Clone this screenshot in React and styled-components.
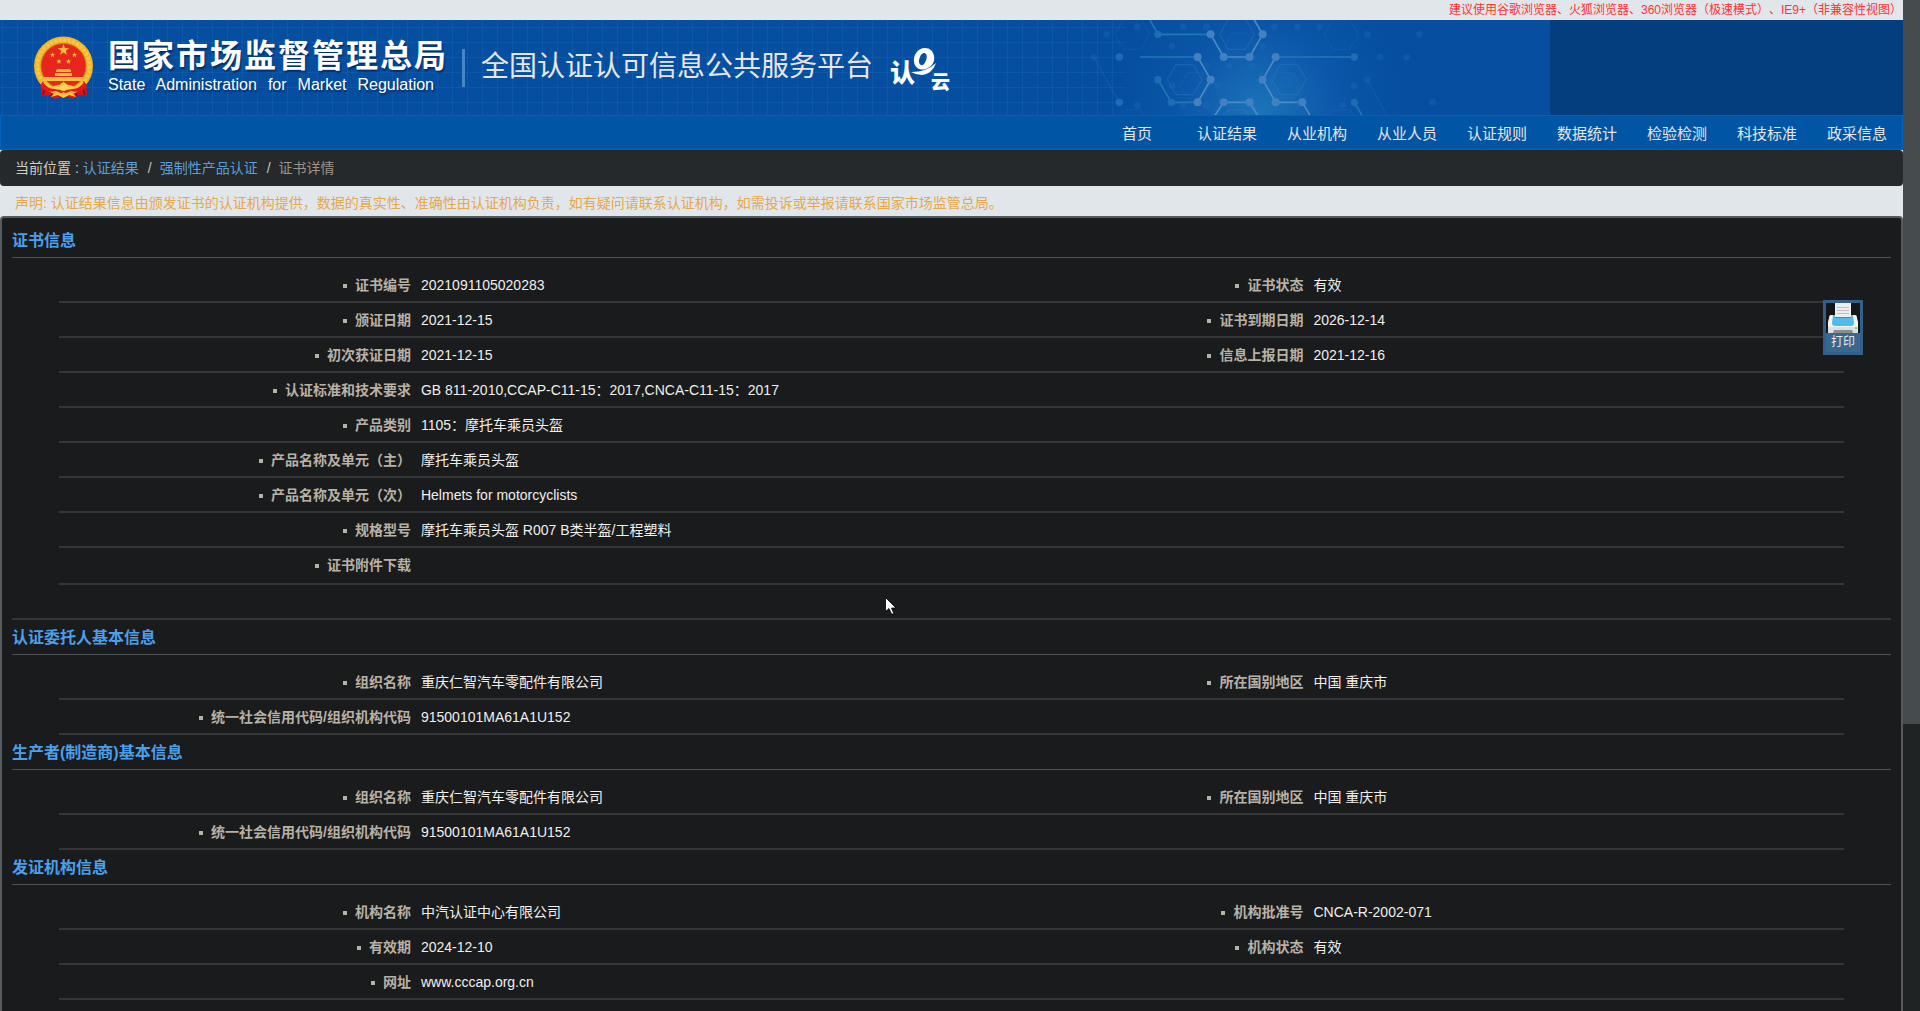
import React from "react";
import styled, { createGlobalStyle } from "styled-components";

const GlobalStyle = createGlobalStyle`
  *, *::before, *::after { box-sizing: border-box; }
  html, body, #root { height: 100%; }
  body {
    margin: 0;
    overflow: hidden;
    background: #e0e6ea;
    color: #e8e6e3;
    font: 14px/20px "Liberation Sans", "Noto Sans CJK SC", sans-serif;
    text-spacing-trim: space-all;
  }
`;

const Shell = styled.div`
  display: grid;
  grid-template-columns: minmax(0, 1fr) 17px;
  height: 100%;
`;

const Page = styled.div`
  display: flex;
  flex-direction: column;
  min-height: 0;
  overflow: hidden;
`;

const ScrollTrack = styled.div`
  background: #1f2324;
`;

const ScrollThumb = styled.div`
  height: ${(p) => p.$size}%;
  background: #464b4e;
`;

const BrowserTip = styled.p`
  flex: none;
  margin: 0;
  padding: 0 1px;
  text-align: right;
  font-size: 12px;
  line-height: 20px;
  color: #ff3333;
`;

const Header = styled.header`
  position: relative;
  flex: none;
  display: flex;
  align-items: center;
  height: 95px;
  padding-left: 33px;
  overflow: hidden;
  background: #053e7e;
`;

const HeaderArt = styled.svg`
  position: absolute;
  top: 0;
  left: 0;
`;

const Brand = styled.div`
  position: relative;
  display: flex;
  align-items: center;
`;

const BrandNames = styled.div`
  display: grid;
  width: 338px;
  margin-left: 13px;
  padding-bottom: 4px;
  color: #fff;
  text-align-last: justify;
  text-shadow: 1px 2px 2px rgba(0, 20, 60, 0.6);
`;

const Agency = styled.strong`
  font-size: 32px;
  line-height: 38px;
  font-weight: 700;
`;

const AgencyEnglish = styled.span`
  padding-right: 12px;
  font-size: 16px;
  line-height: 20px;
`;

const BrandDivider = styled.span`
  width: 3px;
  height: 38px;
  margin: 0 16px;
  background: #4a86c6;
`;

const PlatformName = styled.h1`
  margin: 0 16px 0 0;
  padding-bottom: 2px;
  font-size: 28px;
  line-height: 40px;
  font-weight: 400;
  color: #e8e6e3;
`;

const Nav = styled.nav`
  flex: none;
  display: flex;
  justify-content: flex-end;
  height: 35px;
  border: 1px solid #0063bd;
  background: #0055a5;
`;

const NavLink = styled.a`
  width: 90px;
  text-align: center;
  font-size: 15px;
  line-height: 35px;
  color: #e8e6e3;
  text-decoration: none;
`;

const Breadcrumb = styled.nav`
  flex: none;
  display: flex;
  align-items: center;
  height: 36px;
  padding: 0 15px;
  border-radius: 4px;
  background: #25292b;
  color: #d0ccc6;
`;

const Crumb = styled.span`
  color: #9c9488;

  & + &::before {
    content: "/";
    padding: 0 8px 0 9px;
    color: #c8c3bc;
  }
`;

const CrumbLabel = styled.span`
  margin-right: 4px;
`;

const CrumbLink = styled.a`
  color: #5a9fd8;
  text-decoration: none;
`;

const Notice = styled.p`
  flex: none;
  margin: 0;
  padding: 2px 15px 0;
  height: 30px;
  line-height: 30px;
  color: #e5a84c;
`;

const Panel = styled.main`
  position: relative;
  flex: 1 0 auto;
  padding: 5px 10px 40px;
  border: 2px solid #545b5e;
  border-radius: 4px;
  background: #1a1b1c;
`;

const SectionTitle = styled.h2`
  height: 35px;
  margin: 0 0 10px;
  border-bottom: 1px solid #4d5455;
  font-size: 16px;
  line-height: 36px;
  font-weight: 700;
  color: #4b9fea;
`;

const InfoTable = styled.table`
  width: 95%;
  margin: 0 auto;
  table-layout: fixed;
  border-collapse: separate;
  border-spacing: 0;
`;

const Row = styled.tr`
  height: ${(p) => (p.$tall ? 37 : 35)}px;
`;

const cell = `
  padding: 7px 5px 0;
  border-bottom: 2px solid #343638;
  vertical-align: top;
  line-height: 20px;
`;

const Label = styled.th`
  ${cell}
  width: 20%;
  text-align: right;
  font-weight: 700;
  color: #b8b1a6;

  &::before {
    content: "";
    display: inline-block;
    width: 4px;
    height: 4px;
    margin-right: 8px;
    vertical-align: middle;
    background: #b8b1a6;
  }
`;

const Value = styled.td`
  ${cell}
  text-align: left;
  color: #f0efed;
`;

const Spacer = styled.div`
  height: 35px;
  border-bottom: 2px solid #343638;
`;

const PrintButton = styled.button`
  position: absolute;
  top: 82px;
  right: 38px;
  display: flex;
  flex-direction: column;
  width: 40px;
  height: 55px;
  padding: 0;
  border: 3px solid #32608a;
  background: #38678f;
  color: #e8e6e3;
  font: 12px/18px "Liberation Sans", "Noto Sans CJK SC", sans-serif;
  cursor: pointer;
`;

const PrintCaption = styled.span`
  align-self: center;
`;

const Pointer = styled.svg`
  position: absolute;
  top: 597px;
  left: 885px;
  pointer-events: none;
`;

const navItems = ["首页", "认证结果", "从业机构", "从业人员", "认证规则", "数据统计", "检验检测", "科技标准", "政采信息"];

const organisation = [
  [["组织名称", "重庆仁智汽车零配件有限公司"], ["所在国别地区", "中国 重庆市"]],
  [["统一社会信用代码/组织机构代码", "91500101MA61A1U152"]],
];

const sections = [
  {
    title: "证书信息",
    spaced: true,
    rows: [
      [["证书编号", "2021091105020283"], ["证书状态", "有效"]],
      [["颁证日期", "2021-12-15"], ["证书到期日期", "2026-12-14"]],
      [["初次获证日期", "2021-12-15"], ["信息上报日期", "2021-12-16"]],
      [["认证标准和技术要求", "GB 811-2010,CCAP-C11-15：2017,CNCA-C11-15：2017"]],
      [["产品类别", "1105：摩托车乘员头盔"]],
      [["产品名称及单元（主）", "摩托车乘员头盔"]],
      [["产品名称及单元（次）", "Helmets for motorcyclists"]],
      [["规格型号", "摩托车乘员头盔 R007 B类半盔/工程塑料"]],
      [["证书附件下载", ""]],
    ],
  },
  { title: "认证委托人基本信息", rows: organisation },
  { title: "生产者(制造商)基本信息", rows: organisation },
  {
    title: "发证机构信息",
    rows: [
      [["机构名称", "中汽认证中心有限公司"], ["机构批准号", "CNCA-R-2002-071"]],
      [["有效期", "2024-12-10"], ["机构状态", "有效"]],
      [["网址", "www.cccap.org.cn"]],
    ],
  },
];

const star = (cx, cy, r) =>
  Array.from({ length: 10 }, (_, i) => {
    const a = (Math.PI / 5) * i - Math.PI / 2;
    const d = i % 2 ? r * 0.4 : r;
    return `${cx + d * Math.cos(a)},${cy + d * Math.sin(a)}`;
  }).join(" ");

const hexagon = (cx, cy, r) =>
  Array.from({ length: 6 }, (_, i) => {
    const a = (Math.PI / 3) * i;
    return `${cx + r * Math.cos(a)},${cy + r * Math.sin(a)}`;
  }).join(" ");

const brightNodes = [
  [392, 103], [548, 103], [431, 171], [509, 171], [353, 171], [392, 239], [353, 307], [431, 307],
  [509, 307], [548, 239], [587, 171], [587, 307], [667, 307],
];
const softNodes = [[234, 103], [118, 171], [234, 239], [274, 307], [118, 307], [823, 171], [823, 307]];
const faintNodes = [
  [80, 103], [41, 171], [862, 103], [862, 239], [900, 171], [447, 198], [514, 198], [548, 138], [379, 198],
  [412, 257], [379, 316], [310, 316], [276, 257], [276, 138], [652, 316], [788, 316], [310, 80], [379, 80],
  [584, 80], [652, 80], [720, 80], [172, 80], [172, 316], [822, 257], [980, 171], [1058, 307], [1018, 103],
];

function HeaderBackground() {
  return (
    <HeaderArt width="1550" height="95" viewBox="0 0 1550 95" aria-hidden="true">
      <defs>
        <pattern id="grid" width="15" height="15" x="2" y="7" patternUnits="userSpaceOnUse">
          <path d="M0 .5H15M.5 0V15" stroke="#1262b4" strokeOpacity=".5" fill="none" />
        </pattern>
        <radialGradient id="glow" gradientUnits="userSpaceOnUse" cx="540" cy="330" r="480">
          <stop offset="0" stopColor="#1b74b8" />
          <stop offset=".45" stopColor="#0d58ab" />
          <stop offset="1" stopColor="#064fa0" stopOpacity="0" />
        </radialGradient>
      </defs>
      <rect width="1550" height="95" fill="#064fa0" />
      <rect width="1126" height="95" fill="url(#grid)" />
      <g transform="translate(1080 -20) scale(.3333)">
        <rect x="0" y="60" width="1200" height="286" fill="url(#glow)" />
        <g fill="none" stroke="#3c83c4" strokeWidth="3">
          <g opacity=".4">
            <polygon points={hexagon(471, 103, 52)} />
            <polygon points={hexagon(314, 239, 52)} />
            <polygon points={hexagon(627, 239, 52)} />
            <polygon points={hexagon(471, 375, 52)} />
          </g>
          <g opacity=".18">
            <polygon points={hexagon(157, 103, 52)} />
            <polygon points={hexagon(784, 103, 52)} />
            <polygon points={hexagon(157, 375, 52)} />
            <polygon points={hexagon(784, 375, 52)} />
            <polygon points={hexagon(345, 257, 45)} />
            <polygon points={hexagon(615, 257, 45)} />
            <polygon points={hexagon(480, 138, 45)} />
            <polygon points={hexagon(480, 375, 68)} />
          </g>
        </g>
        <g fill="none" strokeWidth="5">
          <path stroke="#2079b4" d="M234 103H392M180 171H353M234 239L274 307H353M587 171H823M210 60L234 103M823 307L846 346" />
          <path stroke="#4b8cc4" d="M392 103L431 171H509L548 103L523 60M353 171L392 239L353 307M587 171L548 239L587 307H667L690 346M405 346L431 307H509L533 346" />
          <path stroke="#2470b8" strokeWidth="3" opacity=".4" d="M41 171L118 307M862 239L920 346" />
        </g>
        <g fill="#447fc0">{brightNodes.map(([x, y]) => <circle key={`${x}-${y}`} cx={x} cy={y} r="12" />)}</g>
        <g fill="#1d6db6">{softNodes.map(([x, y]) => <circle key={`${x}-${y}`} cx={x} cy={y} r="11" />)}</g>
        <g fill="#2270ba" opacity=".3">{faintNodes.map(([x, y]) => <circle key={`${x}-${y}`} cx={x} cy={y} r="10" />)}</g>
      </g>
    </HeaderArt>
  );
}

function Emblem() {
  return (
    <svg width="62" height="64" viewBox="0 0 62 64" role="img" aria-label="国徽">
      <path d="M9 44L8 60L16 59L22 63L31 60L40 63L46 59L54 60L53 44Z" fill="#d9131a" />
      <path d="M12 50L10 59M49 50L52 59M20 55L18 60M42 55L44 60" stroke="#8f0a10" strokeWidth="1.5" />
      <circle cx="30.500" cy="30" r="29.500" fill="#f4b52b" />
      <circle cx="30.500" cy="30" r="26" fill="none" stroke="#fbc944" strokeWidth="3" strokeDasharray="3 1.500" />
      <circle cx="30.500" cy="30" r="22.500" fill="#e8261d" stroke="#b9761a" strokeWidth="1" />
      <g fill="#f5c040">
        <polygon points={star(30.5, 14, 6)} />
        <polygon points={star(19.5, 19, 2.8)} />
        <polygon points={star(41.5, 19, 2.8)} />
        <polygon points={star(26, 25.5, 2.8)} />
        <polygon points={star(35.5, 25.5, 2.8)} />
        <path d="M23 34L25 33H36L38 34V36H23ZM22 37H39V40H22ZM10 41H51L49 45H12Z" />
      </g>
      <path d="M10 45Q18 55 30 49Q42 55 51 45L54 50Q48 58 38 55L30.500 58L23 55Q13 58 7 50Z" fill="#e01b1d" />
      <path d="M11 46Q20 57 30.500 47Q41 57 50 46" stroke="#fbc53c" strokeWidth="2" fill="none" />
      <path d="M19 52Q25 46 30.500 51Q36 46 42 52Q36 55 30.500 53Q25 55 19 52Z" fill="#ffcf45" />
      <path d="M18 61Q22 55 27 58L30.500 56L34 58Q39 55 43 61L36 59L30.500 62L25 59Z" fill="#ffc83a" />
      <circle cx="30.500" cy="51" r="4" fill="#ffd54f" />
    </svg>
  );
}

const CloudMark = styled.svg`
  fill: #fff;
  font-family: "Noto Sans CJK SC", sans-serif;
  font-weight: 900;
`;

function CloudLogo() {
  return (
    <CloudMark width="64" height="58" viewBox="0 0 64 58" role="img" aria-label="认e云">
      <text x="1" y="43" fontSize="25">认</text>
      <path
        fillRule="evenodd"
        d="M36 9C29 9 24 16 25 23C26 29 31 32 37 30C44 27 46 22 45 17C44 12 41 9 36 9ZM36 14C39 16 38 22 34 26C30 27 29 22 31 18Q32 14 36 14Z"
      />
      <path d="M22 33Q38 33 47 24Q43 35 33 36Q27 36 22 33Z" />
      <text x="42" y="50" fontSize="19">云</text>
    </CloudMark>
  );
}

function PrinterIcon() {
  return (
    <svg width="34" height="30" viewBox="0 0 34 30" aria-hidden="true">
      <rect width="34" height="30" fill="#151617" />
      <path d="M5 12H29Q31 12 31 15L32 19V30H2V19L3 15Q3 12 5 12Z" fill="#f4f5f5" />
      <path d="M2 24H32V30H2Z" fill="#dcdedf" />
      <path d="M7 12H27L28 20Q28 23 25 23H9Q6 23 6 20Z" fill="#4fbcea" />
      <path d="M9 0H25V14H9Z" fill="#eceded" />
      <path d="M11 4.500H23M11 7.500H23M11 10.500H23" stroke="#bfc2c3" />
      <path d="M9 14H25V15H9Z" fill="#2c93c4" />
      <path d="M8 27H26L27 30H7Z" fill="#8b8e90" />
      <rect x="29" y="24" width="2" height="2" fill="#7fd46b" />
    </svg>
  );
}

function InfoSection({ title, rows, spaced }) {
  return (
    <section>
      <SectionTitle>{title}</SectionTitle>
      <InfoTable>
        <colgroup>
          <col width="20%" />
          <col width="30%" />
          <col width="20%" />
          <col width="30%" />
        </colgroup>
        <tbody>
          {rows.map((pairs) => (
            <Row key={pairs[0][0]} $tall={pairs[0][1] === ""}>
              {pairs.map(([label, value]) => (
                <React.Fragment key={label}>
                  <Label scope="row">{label}</Label>
                  <Value colSpan={pairs.length === 1 ? 3 : 1}>{value}</Value>
                </React.Fragment>
              ))}
            </Row>
          ))}
        </tbody>
      </InfoTable>
      {spaced && <Spacer />}
    </section>
  );
}

export default function App() {
  return (
    <Shell>
      <GlobalStyle />
      <Page>
        <BrowserTip>建议使用谷歌浏览器、火狐浏览器、360浏览器（极速模式）、IE9+（非兼容性视图）</BrowserTip>
        <Header>
          <HeaderBackground />
          <Brand>
            <Emblem />
            <BrandNames>
              <Agency>国家市场监督管理总局</Agency>
              <AgencyEnglish>State Administration for Market Regulation</AgencyEnglish>
            </BrandNames>
            <BrandDivider />
            <PlatformName>全国认证认可信息公共服务平台</PlatformName>
            <CloudLogo />
          </Brand>
        </Header>
        <Nav aria-label="主导航">
          {navItems.map((item) => (
            <NavLink key={item} href="#">{item}</NavLink>
          ))}
        </Nav>
        <Breadcrumb aria-label="当前位置">
          <CrumbLabel>当前位置 :</CrumbLabel>
          <Crumb><CrumbLink href="#">认证结果</CrumbLink></Crumb>
          <Crumb><CrumbLink href="#">强制性产品认证</CrumbLink></Crumb>
          <Crumb>证书详情</Crumb>
        </Breadcrumb>
        <Notice>
          声明: 认证结果信息由颁发证书的认证机构提供，数据的真实性、准确性由认证机构负责，如有疑问请联系认证机构，如需投诉或举报请联系国家市场监管总局。
        </Notice>
        <Panel>
          {sections.map((section) => (
            <InfoSection key={section.title} {...section} />
          ))}
          <PrintButton type="button">
            <PrinterIcon />
            <PrintCaption>打印</PrintCaption>
          </PrintButton>
        </Panel>
      </Page>
      <ScrollTrack>
        <ScrollThumb $size={71.6} />
      </ScrollTrack>
      <Pointer width="13" height="20" viewBox="0 0 13 20" aria-hidden="true">
        <path d="M.5 .5V14.500L4 11.500L6.500 17H9L6.500 11H11Z" fill="#fff" stroke="#000" strokeWidth=".8" />
      </Pointer>
    </Shell>
  );
}
